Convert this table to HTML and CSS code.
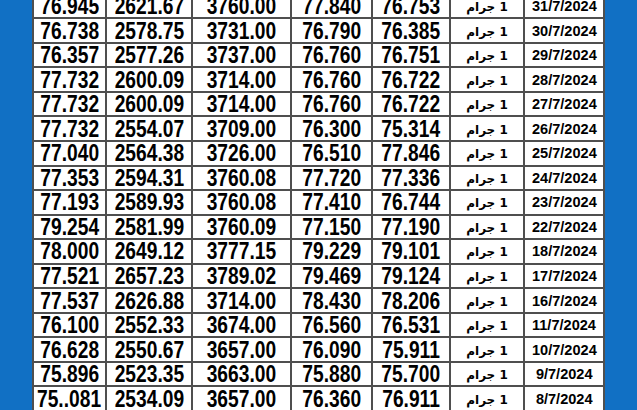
FILE: index.html
```html
<!DOCTYPE html>
<html lang="ar">
<head>
<meta charset="utf-8">
<link rel="stylesheet" href="styles.css">
</head>
<body>
<div class="page">
  <div class="sheet">
    <div class="c"><span class="n">76.945</span></div><div class="c"><span class="n">2621.67</span></div><div class="c"><span class="n">3760.00</span></div><div class="c"><span class="n">77.840</span></div><div class="c"><span class="n">76.753</span></div><div class="c"><span class="u" dir="rtl">1 جرام</span></div><div class="c"><span class="d">31/7/2024</span></div>
    <div class="c"><span class="n">76.738</span></div><div class="c"><span class="n">2578.75</span></div><div class="c"><span class="n">3731.00</span></div><div class="c"><span class="n">76.790</span></div><div class="c"><span class="n">76.385</span></div><div class="c"><span class="u" dir="rtl">1 جرام</span></div><div class="c"><span class="d">30/7/2024</span></div>
    <div class="c"><span class="n">76.357</span></div><div class="c"><span class="n">2577.26</span></div><div class="c"><span class="n">3737.00</span></div><div class="c"><span class="n">76.760</span></div><div class="c"><span class="n">76.751</span></div><div class="c"><span class="u" dir="rtl">1 جرام</span></div><div class="c"><span class="d">29/7/2024</span></div>
    <div class="c"><span class="n">77.732</span></div><div class="c"><span class="n">2600.09</span></div><div class="c"><span class="n">3714.00</span></div><div class="c"><span class="n">76.760</span></div><div class="c"><span class="n">76.722</span></div><div class="c"><span class="u" dir="rtl">1 جرام</span></div><div class="c"><span class="d">28/7/2024</span></div>
    <div class="c"><span class="n">77.732</span></div><div class="c"><span class="n">2600.09</span></div><div class="c"><span class="n">3714.00</span></div><div class="c"><span class="n">76.760</span></div><div class="c"><span class="n">76.722</span></div><div class="c"><span class="u" dir="rtl">1 جرام</span></div><div class="c"><span class="d">27/7/2024</span></div>
    <div class="c"><span class="n">77.732</span></div><div class="c"><span class="n">2554.07</span></div><div class="c"><span class="n">3709.00</span></div><div class="c"><span class="n">76.300</span></div><div class="c"><span class="n">75.314</span></div><div class="c"><span class="u" dir="rtl">1 جرام</span></div><div class="c"><span class="d">26/7/2024</span></div>
    <div class="c"><span class="n">77.040</span></div><div class="c"><span class="n">2564.38</span></div><div class="c"><span class="n">3726.00</span></div><div class="c"><span class="n">76.510</span></div><div class="c"><span class="n">77.846</span></div><div class="c"><span class="u" dir="rtl">1 جرام</span></div><div class="c"><span class="d">25/7/2024</span></div>
    <div class="c"><span class="n">77.353</span></div><div class="c"><span class="n">2594.31</span></div><div class="c"><span class="n">3760.08</span></div><div class="c"><span class="n">77.720</span></div><div class="c"><span class="n">77.336</span></div><div class="c"><span class="u" dir="rtl">1 جرام</span></div><div class="c"><span class="d">24/7/2024</span></div>
    <div class="c"><span class="n">77.193</span></div><div class="c"><span class="n">2589.93</span></div><div class="c"><span class="n">3760.08</span></div><div class="c"><span class="n">77.410</span></div><div class="c"><span class="n">76.744</span></div><div class="c"><span class="u" dir="rtl">1 جرام</span></div><div class="c"><span class="d">23/7/2024</span></div>
    <div class="c"><span class="n">79.254</span></div><div class="c"><span class="n">2581.99</span></div><div class="c"><span class="n">3760.09</span></div><div class="c"><span class="n">77.150</span></div><div class="c"><span class="n">77.190</span></div><div class="c"><span class="u" dir="rtl">1 جرام</span></div><div class="c"><span class="d">22/7/2024</span></div>
    <div class="c"><span class="n">78.000</span></div><div class="c"><span class="n">2649.12</span></div><div class="c"><span class="n">3777.15</span></div><div class="c"><span class="n">79.229</span></div><div class="c"><span class="n">79.101</span></div><div class="c"><span class="u" dir="rtl">1 جرام</span></div><div class="c"><span class="d">18/7/2024</span></div>
    <div class="c"><span class="n">77.521</span></div><div class="c"><span class="n">2657.23</span></div><div class="c"><span class="n">3789.02</span></div><div class="c"><span class="n">79.469</span></div><div class="c"><span class="n">79.124</span></div><div class="c"><span class="u" dir="rtl">1 جرام</span></div><div class="c"><span class="d">17/7/2024</span></div>
    <div class="c"><span class="n">77.537</span></div><div class="c"><span class="n">2626.88</span></div><div class="c"><span class="n">3714.00</span></div><div class="c"><span class="n">78.430</span></div><div class="c"><span class="n">78.206</span></div><div class="c"><span class="u" dir="rtl">1 جرام</span></div><div class="c"><span class="d">16/7/2024</span></div>
    <div class="c"><span class="n">76.100</span></div><div class="c"><span class="n">2552.33</span></div><div class="c"><span class="n">3674.00</span></div><div class="c"><span class="n">76.560</span></div><div class="c"><span class="n">76.531</span></div><div class="c"><span class="u" dir="rtl">1 جرام</span></div><div class="c"><span class="d">11/7/2024</span></div>
    <div class="c"><span class="n">76.628</span></div><div class="c"><span class="n">2550.67</span></div><div class="c"><span class="n">3657.00</span></div><div class="c"><span class="n">76.090</span></div><div class="c"><span class="n">75.911</span></div><div class="c"><span class="u" dir="rtl">1 جرام</span></div><div class="c"><span class="d">10/7/2024</span></div>
    <div class="c"><span class="n">75.896</span></div><div class="c"><span class="n">2523.35</span></div><div class="c"><span class="n">3663.00</span></div><div class="c"><span class="n">75.880</span></div><div class="c"><span class="n">75.700</span></div><div class="c"><span class="u" dir="rtl">1 جرام</span></div><div class="c"><span class="d">9/7/2024</span></div>
    <div class="c"><span class="n">75..081</span></div><div class="c"><span class="n">2534.09</span></div><div class="c"><span class="n">3657.00</span></div><div class="c"><span class="n">76.360</span></div><div class="c"><span class="n">76.911</span></div><div class="c"><span class="u" dir="rtl">1 جرام</span></div><div class="c"><span class="d">8/7/2024</span></div>
    <div class="c"></div><div class="c"></div><div class="c"></div><div class="c"></div><div class="c"></div><div class="c"></div><div class="c"></div>
  </div>
</div>
</body>
</html>
```

FILE: styles.css
```css
html, body {
  margin: 0;
  padding: 0;
  height: 410px;
  overflow: hidden;
  background: #1170c4;
}

.page {
  padding-left: 32px;
  height: 410px;
  overflow: hidden;
}

.sheet {
  margin-top: -10.5px;
  display: inline-grid;
  grid-template-columns: 71px 84px 97px 79px 76px 72px 78px;
  grid-auto-rows: 22.56px;
  gap: 2px;
  padding: 2px;
  background: #4f4f4f;
}

.c {
  background: #ffffff;
  display: flex;
  align-items: center;
  justify-content: center;
  overflow: hidden;
  color: #000;
  font-family: "Liberation Sans", Arial, sans-serif;
  font-weight: bold;
}

.n {
  display: inline-block;
  font-size: 24px;
  line-height: 22px;
  transform: scaleX(0.8);
  white-space: nowrap;
}

.d {
  display: inline-block;
  font-size: 15px;
  line-height: 18px;
  transform: scaleX(0.97);
  white-space: nowrap;
}

.u {
  display: inline-block;
  font-family: "DejaVu Sans", "Liberation Sans", sans-serif;
  font-size: 12px;
  line-height: 16px;
  font-weight: bold;
  white-space: nowrap;
  transform: translateY(1px);
}
```
